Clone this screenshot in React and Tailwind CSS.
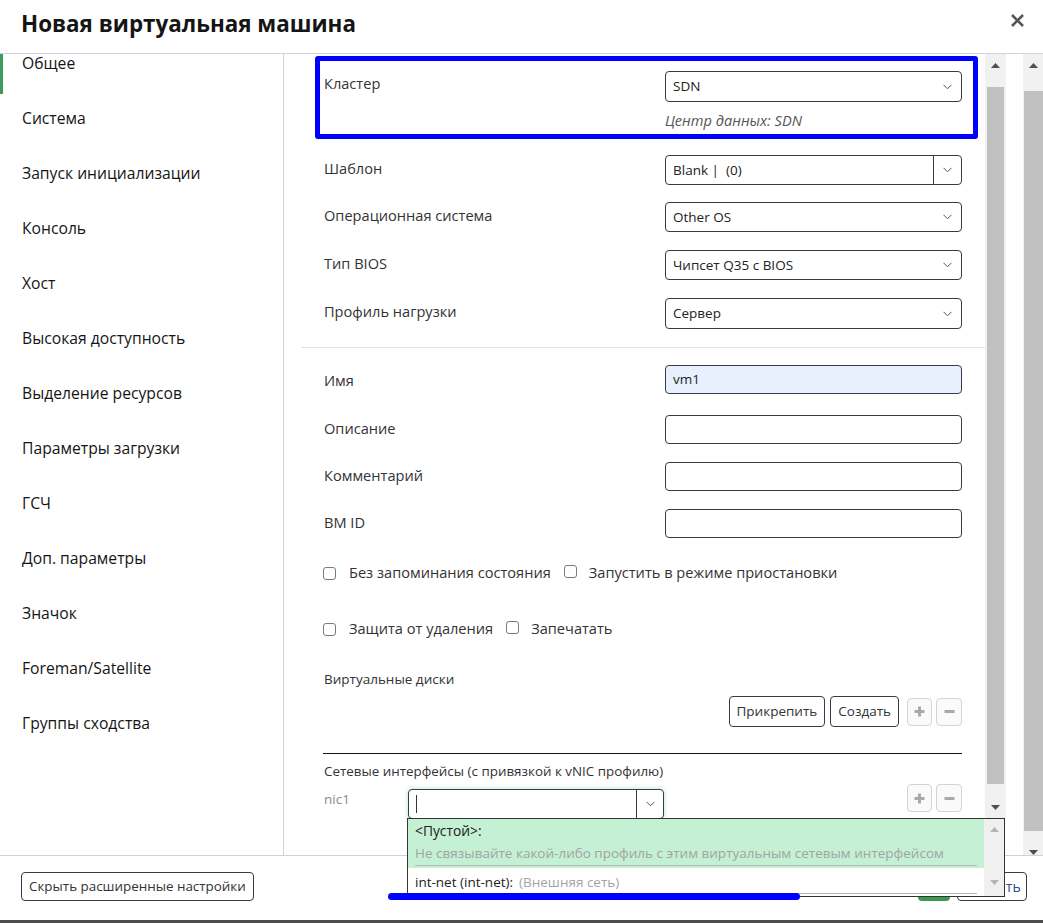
import React from "react";

const Chevron = () => (
  <svg width="9" height="6" viewBox="0 0 9 6" className="shrink-0">
    <path d="M0.5 0.8L4.5 4.8L8.5 0.8" fill="none" stroke="#555" strokeWidth="1" />
  </svg>
);

const TriUp = ({ c = "#505050" }) => (
  <svg width="9" height="5" viewBox="0 0 9 5">
    <path d="M0 5L4.5 0L9 5Z" fill={c} />
  </svg>
);
const TriDown = ({ c = "#505050" }) => (
  <svg width="9" height="5" viewBox="0 0 9 5">
    <path d="M0 0L4.5 5L9 0Z" fill={c} />
  </svg>
);

const Select = ({ value, h = "h-[30px]" }) => (
  <div className={`w-[297px] ${h} border border-[#3b3b48] rounded-[4px] flex items-center justify-between pl-[7px] pr-[9px] text-[13.5px] text-[#222]`}>
    <span className="whitespace-pre">{value}</span>
    <Chevron />
  </div>
);

const SplitSelect = ({ value }) => (
  <div className="w-[297px] h-[30px] border border-[#3b3b48] rounded-[4px] flex items-stretch text-[13.5px] text-[#222]">
    <div className="flex-1 flex items-center pl-[7px] whitespace-pre">{value}</div>
    <div className="w-[28px] border-l border-[#3b3b48] flex items-center justify-center">
      <Chevron />
    </div>
  </div>
);

const Input = ({ value, filled }) => (
  <div
    className={`w-[297px] h-[29px] border border-[#3b3b48] rounded-[4px] flex items-center pl-[7px] text-[13.5px] text-[#222] ${
      filled ? "bg-[#e8f0fe]" : "bg-white"
    }`}
  >
    {value}
  </div>
);

const Row = ({ label, children, className = "", lc = "-mt-[5px]" }) => (
  <div className={`ml-[23px] w-[638px] flex items-center ${className}`}>
    <div className={`w-[341px] text-[14.6px] text-[#333] leading-[20px] ${lc}`}>{label}</div>
    {children}
  </div>
);

const Checkbox = () => (
  <span className="inline-block w-[13px] h-[13px] border border-[#7a7a7a] rounded-[3px] bg-white shrink-0" />
);

const PlusMinus = ({ className = "" }) => (
  <div className={`flex gap-[4px] ${className}`}>
    <div className="w-[25px] h-[28px] border border-[#d4d4d4] rounded-[4px] bg-[#fafafa] flex items-center justify-center">
      <svg width="11" height="11" viewBox="0 0 11 11">
        <path d="M5.5 0.5V10.5M0.5 5.5H10.5" stroke="#a9a9a9" strokeWidth="3" />
      </svg>
    </div>
    <div className="w-[26px] h-[28px] border border-[#d4d4d4] rounded-[4px] bg-[#fafafa] flex items-center justify-center">
      <svg width="11" height="11" viewBox="0 0 11 11">
        <path d="M0.5 5.5H10.5" stroke="#a9a9a9" strokeWidth="3" />
      </svg>
    </div>
  </div>
);

const navItems = [
  "Общее",
  "Система",
  "Запуск инициализации",
  "Консоль",
  "Хост",
  "Высокая доступность",
  "Выделение ресурсов",
  "Параметры загрузки",
  "ГСЧ",
  "Доп. параметры",
  "Значок",
  "Foreman/Satellite",
  "Группы сходства",
];

export default function App() {
  return (
    <div className="w-[1043px] h-[923px] bg-white relative overflow-hidden font-['Open_Sans',sans-serif] text-[#151515]">
      <div className="flex flex-col h-[920px]">
        {/* Header */}
        <header className="h-[54px] shrink-0 border-b border-[#d2d2dc] flex items-start justify-between pl-[21px] pr-[19px]">
          <h1 className="text-[22.4px] font-bold leading-[30px] mt-[9px] text-[#151515]">Новая виртуальная машина</h1>
          <svg width="13" height="13" viewBox="0 0 13 13" className="mt-[14px]">
            <path d="M1 1L12 12M12 1L1 12" stroke="#555" strokeWidth="2.6" />
          </svg>
        </header>

        {/* Body */}
        <div className="flex h-[801px] shrink-0">
          {/* Nav */}
          <nav className="w-[284px] shrink-0 border-r border-[#d2d2d2]">
            <div className="-mt-[1px]">
              {navItems.map((t, i) => (
                <div key={t} className="h-[55px] flex items-start">
                  <div className={`w-[3px] h-[40px] mt-[1px] ${i === 0 ? "bg-[#3c9a5a]" : "bg-transparent"}`} />
                  <span className="ml-[19px] text-[15.7px] leading-[20px] text-[#151515]">{t}</span>
                </div>
              ))}
            </div>
          </nav>

          {/* Content */}
          <div className="flex flex-1">
            <div className="w-[701px] shrink-0 pl-[17px] pt-[2px]">
              {/* Cluster box */}
              <div className="ml-[14px] w-[663px] h-[83px] border-[5px] border-[#0000ff] rounded-[3px] pl-[4px] pr-[11px] pt-[10px]">
                <div className="flex">
                  <div className="w-[341px] pt-[2px] text-[14.6px] text-[#333] leading-[20px]">Кластер</div>
                  <div className="w-[297px]">
                    <Select value="SDN" h="h-[31px]" />
                    <div className="mt-[8px] text-[14.6px] italic text-[#555] leading-[20px]">Центр данных: SDN</div>
                  </div>
                </div>
              </div>

              <Row label="Шаблон" className="mt-[16px]">
                <SplitSelect value="Blank |  (0)" />
              </Row>
              <Row label="Операционная система" className="mt-[17px]">
                <Select value="Other OS" />
              </Row>
              <Row label="Тип BIOS" className="mt-[18px]">
                <Select value="Чипсет Q35 с BIOS" />
              </Row>
              <Row label="Профиль нагрузки" className="mt-[18px]">
                <Select value="Сервер" h="h-[31px]" />
              </Row>

              <div className="mt-[18px] h-px bg-[#e3e3e3]" />

              <Row label="Имя" className="mt-[17px]" lc="">
                <Input value="vm1" filled />
              </Row>
              <Row label="Описание" className="mt-[21px]" lc="-mt-[3px]">
                <Input />
              </Row>
              <Row label="Комментарий" className="mt-[18px]" lc="-mt-[3px]">
                <Input />
              </Row>
              <Row label="ВМ ID" className="mt-[18px]" lc="-mt-[3px]">
                <Input />
              </Row>

              <div className="ml-[22px] mt-[25px] h-[20px] flex items-center text-[14.6px] text-[#333]">
                <Checkbox />
                <span className="ml-[13px]">Без запоминания состояния</span>
                <span className="ml-[13px]"><Checkbox /></span>
                <span className="ml-[12px]">Запустить в режиме приостановки</span>
              </div>
              <div className="ml-[22px] mt-[36px] h-[20px] flex items-center text-[14.6px] text-[#333]">
                <Checkbox />
                <span className="ml-[13px]">Защита от удаления</span>
                <span className="ml-[13px]"><Checkbox /></span>
                <span className="ml-[12px]">Запечатать</span>
              </div>

              <div className="ml-[23px] mt-[30px] h-[20px] text-[13.5px] leading-[20px] text-[#333]">Виртуальные диски</div>

              <div className="ml-[23px] w-[638px] mt-[7px] flex justify-end items-center">
                <div className="h-[31px] px-[7px] border border-[#3b3b48] rounded-[4px] flex items-center text-[13.5px] text-[#333]">Прикрепить</div>
                <div className="ml-[5px] h-[31px] px-[7px] border border-[#3b3b48] rounded-[4px] flex items-center text-[13.5px] text-[#333]">Создать</div>
                <PlusMinus className="ml-[8px]" />
              </div>

              <div className="ml-[22px] w-[639px] mt-[26px] h-px bg-[#111]" />

              <div className="ml-[23px] mt-[7px] h-[20px] text-[13.4px] leading-[20px] text-[#333]">
                Сетевые интерфейсы (с привязкой к vNIC профилю)
              </div>

              <div className="ml-[23px] w-[638px] mt-[8px] flex items-start">
                <div className="w-[84px] text-[13.5px] text-[#8a8a8a] leading-[20px]">nic1</div>
                <div className="relative z-20">
                  <div className="w-[256px] h-[30px] border border-[#3b3b48] rounded-[4px] flex items-stretch shadow-[0_0_5px_rgba(80,200,90,0.45)] bg-white">
                    <div className="flex-1 flex items-center pl-[7px]">
                      <span className="w-px h-[18px] bg-[#333]" />
                    </div>
                    <div className="w-[27px] border-l border-[#3b3b48] flex items-center justify-center">
                      <Chevron />
                    </div>
                  </div>
                  {/* Dropdown */}
                  <div className="absolute left-[-1px] top-[29px] w-[598px] h-[79px] border border-[#333] bg-white flex overflow-hidden">
                    <div className="flex-1">
                      <div className="bg-[#c4f0d4] h-[49px] px-[7px] pt-[2px]">
                        <div className="text-[13.8px] leading-[20px] text-[#222]">&lt;Пустой&gt;:</div>
                        <div className="text-[13.5px] leading-[20px] text-[#a3a3a3] mt-[2px] whitespace-nowrap">
                          Не связывайте какой-либо профиль с этим виртуальным сетевым интерфейсом
                        </div>
                        <div className="h-px bg-[#b8b8b8] mt-[2px]" />
                      </div>
                      <div className="px-[7px] pt-[4px]">
                        <div className="text-[13.5px] leading-[20px] text-[#222]">
                          int-net (int-net):<span className="ml-[6px] text-[#a3a3a3]">(Внешняя сеть)</span>
                        </div>
                        <div className="h-px bg-[#b8b8b8] mt-[1px]" />
                      </div>
                    </div>
                    <div className="w-[20px] bg-[#f0f0f0] flex flex-col items-center">
                      <div className="mt-[8px]"><TriUp c="#b5b5b5" /></div>
                      <div className="mt-[48px]"><TriDown c="#b5b5b5" /></div>
                    </div>
                  </div>
                </div>
                <div className="flex-1" />
                <PlusMinus className="-mt-[5px]" />
              </div>
            </div>

            {/* Inner scrollbar */}
            <div className="w-[21px] shrink-0 flex flex-col">
              <div className="h-[764px] bg-[#f1f1f1] flex flex-col items-center">
                <div className="h-[22px] flex items-center"><TriUp /></div>
                <div className="mt-[11px] w-[17px] h-[697px] bg-[#c1c1c1]" />
                <div className="mt-[12px] h-[22px] flex items-center"><TriDown /></div>
              </div>
            </div>
            <div className="w-[17px] shrink-0" />
            {/* Outer scrollbar */}
            <div className="w-[20px] shrink-0 bg-[#f1f1f1] flex flex-col items-center">
              <div className="h-[22px] flex items-center"><TriUp /></div>
              <div className="mt-[15px] w-[19px] h-[740px] bg-[#c1c1c1]" />
              <div className="h-[24px] flex items-end"><TriDown /></div>
            </div>
          </div>
        </div>

        {/* Footer */}
        <footer className="h-[65px] shrink-0 border-t border-[#d2d2d2] flex items-start pt-[16px] pl-[21px] pr-[16px]">
          <div className="h-[29px] px-[7px] border border-[#3b3b48] rounded-[4px] flex items-center text-[13.4px] text-[#333]">
            Скрыть расширенные настройки
          </div>
          <div className="flex-1" />
          <div className="h-[29px] w-[32px] bg-[#3c9a4e] rounded-[4px] flex items-center justify-center text-[14px] text-white">OK</div>
          <div className="ml-[7px] h-[29px] w-[70px] border border-[#3b3b48] rounded-[4px] flex items-center justify-center text-[14px] text-[#2b4e8c]">
            Закрыть
          </div>
        </footer>
      </div>
      <div className="h-[3px] bg-[#4d4d4d]" />

      {/* annotation underline */}
      <div className="absolute left-[388px] top-[893px] w-[412px] h-[7px] rounded-full bg-[#0000ff] z-30" />
    </div>
  );
}
